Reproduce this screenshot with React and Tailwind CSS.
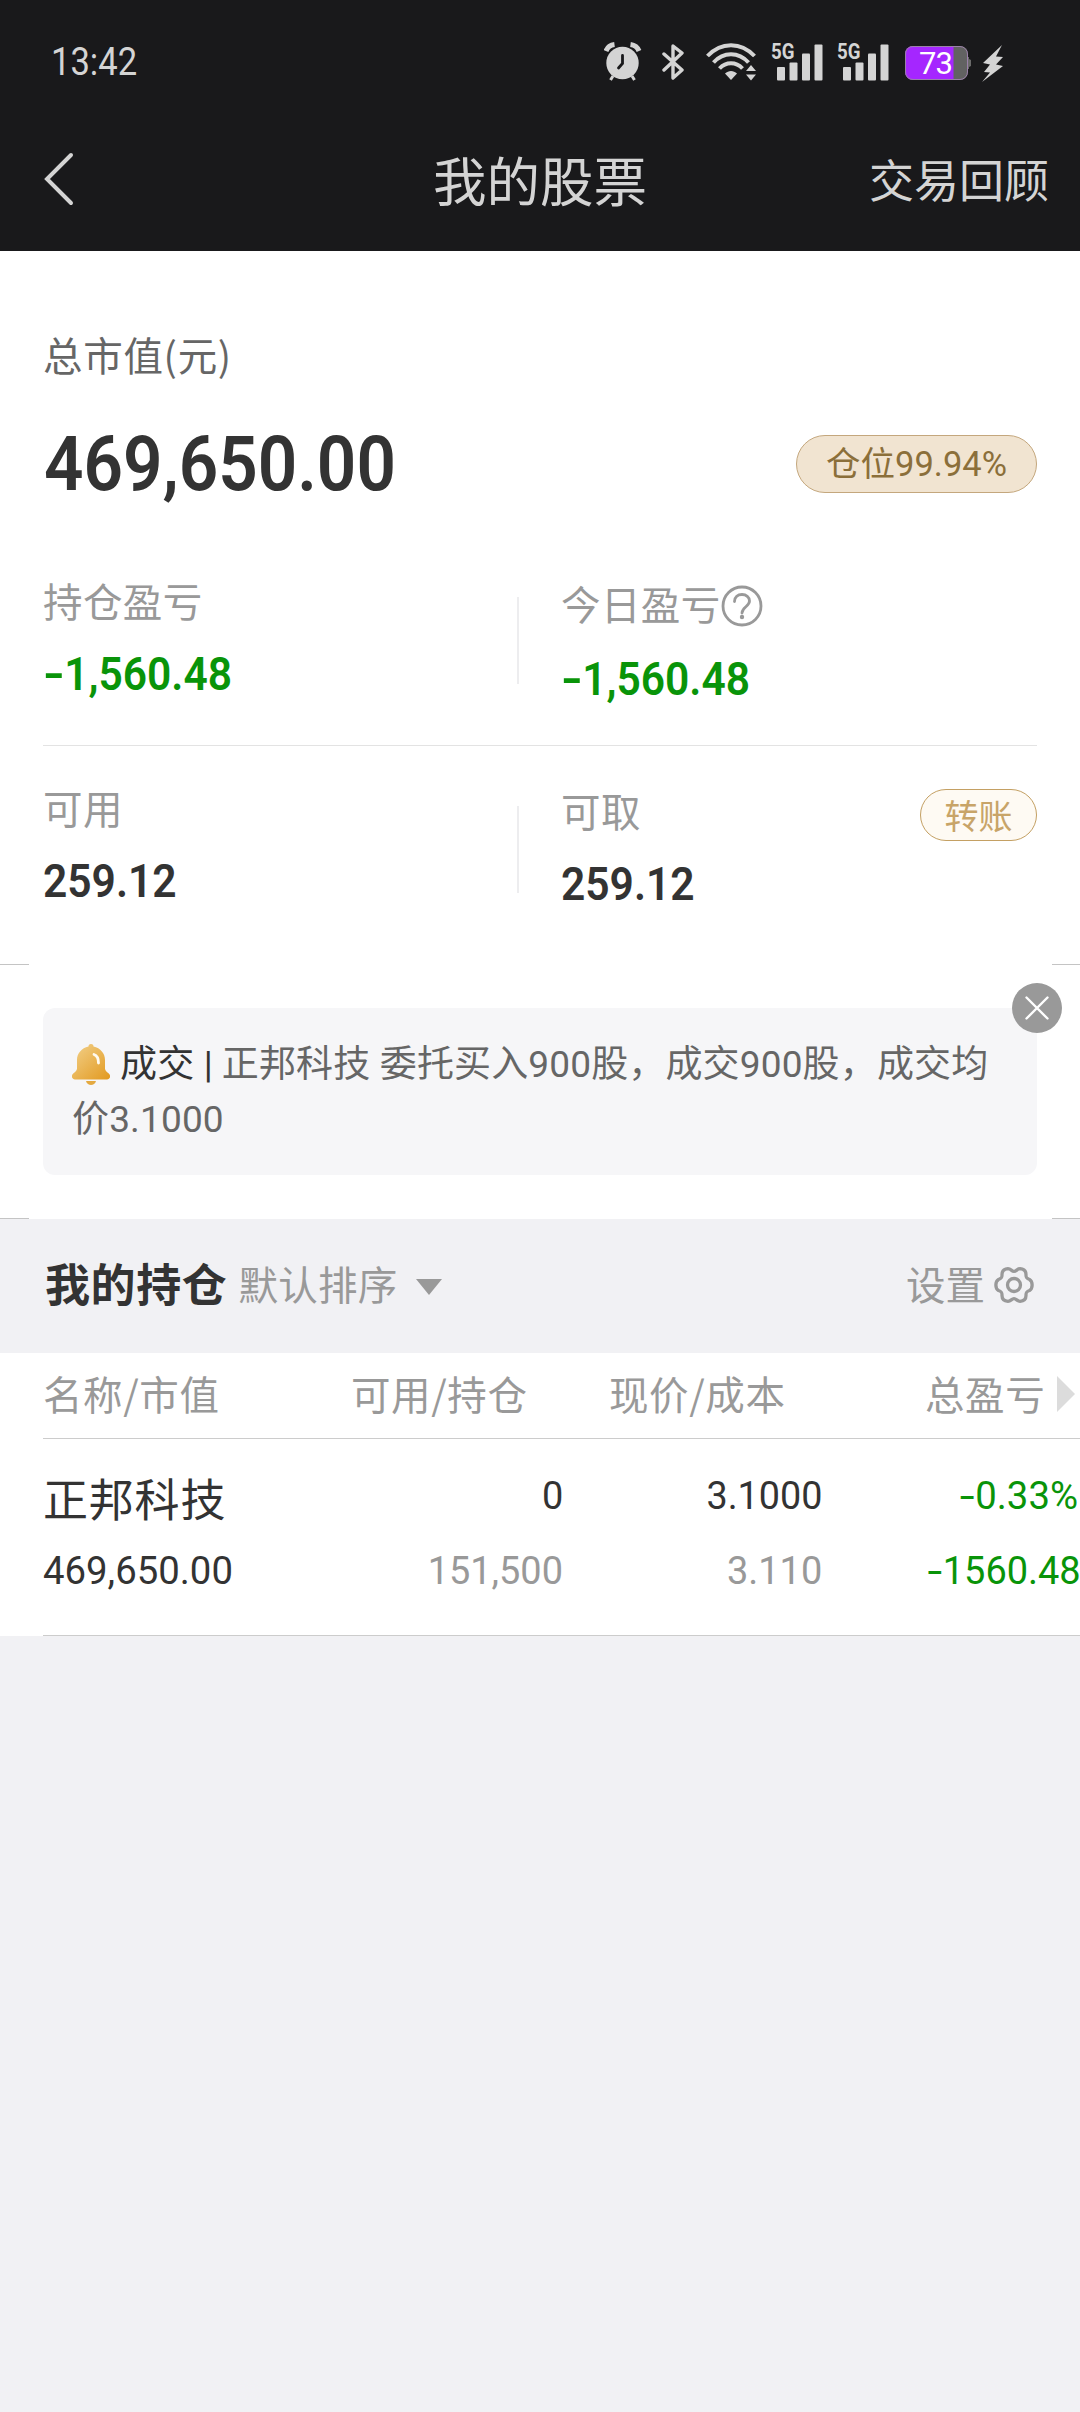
import React from 'react';
import clsx from 'clsx';

// Digits are set a bit narrower than Roboto's natural width, the minus a bit wider
const Num = ({ children, className }) => {
  const negative = children.startsWith('-');
  return (
    <span className={clsx("inline-block whitespace-nowrap font-['Roboto',sans-serif]", className)}>
      {negative && <span className="inline-block origin-left scale-x-[1.4] mr-[0.13em]">-</span>}
      {negative ? children.slice(1) : children}
    </span>
  );
};

const AlarmIcon = () => (
  <svg className="w-[38px] h-[40px]" viewBox="0 0 38 40" fill="none">
    <circle cx="18.5" cy="21" r="16.2" fill="#d4d4d4" />
    <path d="M2 9C3.500 5 6.500 3 10.500 2.500M35 9C33.500 5 30.500 3 26.500 2.500" stroke="#d4d4d4" strokeWidth="5" />
    <path d="M9 34l-2.500 4M28 34l2.500 4" stroke="#d4d4d4" strokeWidth="3" />
    <path d="M18.500 13.500v8l-4 4.500" stroke="#19191b" strokeWidth="2.800" strokeLinecap="round" />
  </svg>
);

const BluetoothIcon = () => (
  <svg className="w-[22px] h-[38px]" viewBox="0 0 22 38" fill="none" stroke="#d4d4d4" strokeWidth="3.400" strokeLinejoin="round" strokeLinecap="round">
    <path d="M2 11l18 16-9 8V3l9 7L2 27" />
  </svg>
);

const WifiIcon = () => (
  <svg className="w-[50px] h-[38px]" viewBox="0 0 50 38" fill="none">
    <path d="M1.500 13C15-1.500 35-1.500 48.500 13" stroke="#d4d4d4" strokeWidth="4" />
    <path d="M7.500 19.500C17.500 8.500 32.500 8.500 42.500 19.500" stroke="#d4d4d4" strokeWidth="4" />
    <path d="M13.500 25.500C20 18.500 30 18.500 36.500 25.500" stroke="#d4d4d4" strokeWidth="4" />
    <path d="M19 30.500C22.500 27 27.500 27 31 30.500L25 37z" fill="#d4d4d4" />
    <path d="M40 28l5-6 5 6zM40 31.500h10l-5 6z" fill="#d4d4d4" />
  </svg>
);

const SignalIcon = () => (
  <div className="relative w-[52px] h-[38px]">
    <span className="absolute left-0 -top-[4px] origin-left scale-x-[0.85] font-['Roboto',sans-serif] text-[22px] leading-[25px] font-bold text-[#d4d4d4]">5G</span>
    <svg className="w-[52px] h-[38px]" viewBox="0 0 52 38" fill="#d4d4d4">
      <rect x="6" y="24" width="8" height="13.500" rx="1" />
      <rect x="18.500" y="19.500" width="8" height="18" rx="1" />
      <rect x="31" y="10.500" width="8" height="27" rx="1" />
      <rect x="43.500" y="1.500" width="8" height="36" rx="1" />
    </svg>
  </div>
);

const Battery = () => (
  <div className="relative w-[66px] h-[34px]">
    <svg className="w-[66px] h-[34px]" viewBox="0 0 66 34">
      <defs>
        <clipPath id="cell"><rect width="63" height="34" rx="8" /></clipPath>
      </defs>
      <path d="M62 11h2v2l2 1v6l-2 1v2h-2z" fill="#6a6a6a" />
      <g clipPath="url(#cell)">
        <rect width="63" height="34" fill="#626262" />
        <rect width="48.500" height="34" fill="#a526ff" />
      </g>
      <rect x=".5" y=".5" width="62" height="33" rx="7.500" fill="none" stroke="#9a80a8" />
    </svg>
    <span className="absolute left-[14px] top-0 font-['Roboto',sans-serif] text-[31px] leading-[35px] tracking-[-1px] text-white">73</span>
  </div>
);

const BellIcon = () => (
  <svg className="w-[38px] h-[42px]" viewBox="0 0 38 42">
    <defs>
      <linearGradient id="bell" x1="0" y1="0" x2="1" y2="1">
        <stop offset="0.2" stopColor="#efc676" />
        <stop offset="1" stopColor="#e2991f" />
      </linearGradient>
    </defs>
    <path d="M14 37h10c-.5 2.500-3 4-5 4s-4.500-1.500-5-4z" fill="#e4a940" />
    <path d="M19 0c1.800 0 2.500 1.300 2.500 2.500C28.500 4 33 9.500 33 16v8.500c0 1.500 1 2.800 3.500 4.800 3 2.500 1.500 6.200-1.500 6.200H3c-3 0-4.500-3.700-1.500-6.200 2.500-2 3.500-3.300 3.500-4.800V16C5 9.500 9.500 4 16.500 2.500 16.500 1.300 17.200 0 19 0z" fill="url(#bell)" />
    <path d="M22 10.500c3 1 4.500 4 4.500 8.500" fill="none" stroke="#fffaf0" strokeWidth="2.800" strokeLinecap="round" />
  </svg>
);

const GearIcon = () => (
  <svg className="w-[40px] h-[40px]" viewBox="0 0 40 40" fill="none" stroke="#999" strokeWidth="3.300" strokeLinejoin="round">
    <path d="M20 6.300C22.500 6.300 23 3.700 26 3.700C30 4 32 6.500 32 9.500C31.800 12.500 32.500 13.500 35.500 14.500C39 16.500 39 23.500 35.500 25.500C32.500 26.500 31.800 27.500 32 30.500C32 33.500 30 36 26 36.300C23 36.300 22.500 33.700 20 33.700C17.500 33.700 17 36.300 14 36.300C10 36 8 33.500 8 30.500C8.200 27.500 7.500 26.500 4.500 25.500C1 23.500 1 16.500 4.500 14.500C7.500 13.500 8.200 12.500 8 9.500C8 6.500 10 4 14 3.700C17 3.700 17.500 6.300 20 6.300z" />
    <circle cx="20" cy="20" r="6.500" />
  </svg>
);

const HelpIcon = () => (
  <svg className="w-[42px] h-[42px] mt-[5px]" viewBox="0 0 42 42" fill="none" stroke="#999" strokeWidth="2.800">
    <circle cx="21" cy="21" r="19" />
    <path d="M13.500 16.500c0-4.500 3.300-7 7.500-7s7.500 2.700 7.500 6.500c0 5.500-7.500 6-7.500 12" strokeLinecap="round" />
    <circle cx="21" cy="32" r="2.200" fill="#999" stroke="none" />
  </svg>
);

// Short hairlines that peek out on both screen edges
const EdgeLines = () => (
  <div className="flex justify-between h-px">
    <div className="w-[29px] bg-[#c4c4c4]" />
    <div className="w-[28px] bg-[#c4c4c4]" />
  </div>
);

const stats = [
  [
    { label: '持仓盈亏', value: '-1,560.48', color: 'text-[#099409]' },
    { label: '今日盈亏', value: '-1,560.48', color: 'text-[#099409]', help: true },
  ],
  [
    { label: '可用', value: '259.12', color: 'text-[#333]' },
    { label: '可取', value: '259.12', color: 'text-[#333]', transfer: true },
  ],
];

const Stat = ({ item }) => (
  <div className="flex flex-col">
    <div className="flex items-center justify-between h-[50px]">
      <div className="flex items-center">
        <span className="text-[39.5px] leading-[50px] tracking-[0.4px] text-[#999]">{item.label}</span>
        {item.help && <HelpIcon />}
      </div>
      {item.transfer && (
        <button className="mt-[9px] w-[117px] h-[52px] rounded-full border border-[#c4a063] bg-[#fefaf3] text-[34px] leading-[47px] text-[#c8a468]">
          转账
        </button>
      )}
    </div>
    <Num
      className={clsx(
        'self-start origin-left scale-x-[0.905] text-[47px] leading-[56px] font-semibold',
        item.help ? 'mt-[23px]' : 'mt-[21px]',
        item.color
      )}
    >
      {item.value}
    </Num>
  </div>
);

const columns = 'grid grid-cols-[282px_237px_259px_259px] pl-[43px]';

const App = () => {
  return (
    <div className="w-[1080px] h-[2412px] overflow-hidden bg-[#f1f1f4] font-['Noto_Sans_CJK_SC',sans-serif]">
      {/* Status bar */}
      <div className="flex items-center justify-between h-[124px] bg-[#19191b] pl-[51px] pr-[76px]">
        <Num className="origin-left scale-x-[0.91] text-[38px] text-[#d4d4d4]">13:42</Num>
        <div className="flex items-center">
          <AlarmIcon />
          <div className="ml-[20px]"><BluetoothIcon /></div>
          <div className="ml-[22px]"><WifiIcon /></div>
          <div className="ml-[15px]"><SignalIcon /></div>
          <div className="ml-[14px]"><SignalIcon /></div>
          <div className="ml-[16px] mt-[2px]"><Battery /></div>
          <svg className="ml-[11px] mt-[2px] w-[22px] h-[37px]" viewBox="0 0 22 37" fill="#d4d4d4">
            <path d="M20 0L1 18l7 1.500L2 27l6 .5L0 37l21-16-7-1.500 7-7.500-7-.5z" />
          </svg>
        </div>
      </div>

      {/* Title bar */}
      <div className="grid grid-cols-[1fr_auto_1fr] items-center h-[127px] bg-[#19191b] px-[31px] pb-[18px] text-[#d4d4d4]">
        <svg className="ml-[13px] w-[32px] h-[54px]" viewBox="0 0 32 54" fill="none" stroke="#d4d4d4" strokeWidth="4" strokeLinecap="round">
          <path d="M27 3L3 27l24 24" />
        </svg>
        <h1 className="text-center text-[53.5px] leading-[60px] whitespace-nowrap">我的股票</h1>
        <div className="text-right text-[45px] leading-[60px]">交易回顾</div>
      </div>

      {/* Assets */}
      <div className="h-[713px] bg-white px-[43px] pt-[78px]">
        <div className="text-[39.5px] leading-[50px] tracking-[0.7px] text-[#666]">总市值(元)</div>
        <div className="flex items-center justify-between mt-[44px] h-[82px]">
          <Num className="origin-left scale-x-[0.91] pl-px text-[76px] leading-[82px] font-semibold text-[#333]">469,650.00</Num>
          <div className="w-[241px] h-[58px] rounded-full border border-[#c4a77d] bg-[#f1e4d1] text-center font-['Roboto','Noto_Sans_CJK_SC',sans-serif] text-[34.5px] leading-[57px] text-[#8b6f3a]">
            仓位99.94%
          </div>
        </div>
        {stats.map((row, i) => (
          <div key={i} className={clsx('flex', i === 0 ? 'mt-[70px] h-[171px] border-b border-[#e3e3e3]' : 'pt-[36px]')}>
            <div className="w-[474px]"><Stat item={row[0]} /></div>
            <div className={clsx('w-[2px] h-[87px] bg-[#ededef]', i === 0 ? 'mt-[22px]' : 'mt-[24px]')} />
            <div className="mt-[3px] ml-[42px] flex-1"><Stat item={row[1]} /></div>
          </div>
        ))}
      </div>

      {/* Deal notice */}
      <div className="bg-white h-[255px]">
        <EdgeLines />
        <div className="relative mx-[43px] mt-[43px] h-[167px] rounded-[12px] bg-[#f6f6f8] pl-[29px] pt-[29px] font-['Roboto','Noto_Sans_CJK_SC',sans-serif] text-[37px] leading-[55px] tracking-[0.15px] text-[#666]">
          <div className="flex items-center whitespace-nowrap">
            <BellIcon />
            <span className="ml-[10px] text-[#333]">成交 | </span>
            <span className="ml-[9px]">正邦科技 委托买入900股，成交900股，成交均</span>
          </div>
          <div>价3.1000</div>
          <button className="absolute -right-[25px] -top-[25px] flex items-center justify-center size-[50px] rounded-full bg-[#999]">
            <svg className="size-[24px]" viewBox="0 0 24 24" stroke="#fff" strokeWidth="2.400" strokeLinecap="round">
              <path d="M1.500 1.500l21 21M22.500 1.500l-21 21" />
            </svg>
          </button>
        </div>
        <div className="mt-[43px]"><EdgeLines /></div>
      </div>

      {/* Holdings header */}
      <div className="flex items-center justify-between h-[134px] pl-[45px] pr-[46px] pb-[7px]">
        <div className="flex items-center">
          <span className="text-[45px] font-bold tracking-[0.6px] text-[#333]">我的持仓</span>
          <span className="ml-[11px] text-[39.5px] tracking-[0.3px] text-[#999]">默认排序</span>
          <svg className="ml-[18px] mt-[8px] w-[26px] h-[16px]" viewBox="0 0 26 16" fill="#999">
            <path d="M0 0h26L13 16z" />
          </svg>
        </div>
        <div className="flex items-center">
          <span className="text-[39.5px] text-[#999]">设置</span>
          <div className="ml-[9px] mt-[4px]"><GearIcon /></div>
        </div>
      </div>

      {/* Holdings table */}
      <div className="bg-white">
        <div className={clsx(columns, 'items-center h-[85px] pb-[5px] text-[39.5px] leading-[50px] tracking-[0.6px] whitespace-nowrap text-[#999]')}>
          <div>名称/市值</div>
          <div className="pl-[26px]">可用/持仓</div>
          <div className="pl-[47px]">现价/成本</div>
          <div className="flex items-center pl-[104px]">
            总盈亏
            <svg className="ml-[12px] mt-[2px] w-[18px] h-[36px]" viewBox="0 0 18 36" fill="#dcdcdc">
              <path d="M0 0l18 18L0 36z" />
            </svg>
          </div>
        </div>
        <div className="ml-[43px] h-px bg-[#ccc]" />
        <div className={clsx(columns, 'h-[196px] pt-[29px] text-[39.5px] leading-[50px] text-[#333]')}>
          <div className="flex flex-col">
            <span className="text-[45px] leading-[60px] tracking-[0.8px]">正邦科技</span>
            <Num className="mt-[18px] self-start origin-left scale-x-[0.97] font-[450]">469,650.00</Num>
          </div>
          <div className="flex flex-col items-end">
            <Num className="mt-[3px] -mr-px origin-right scale-x-[0.96] font-[450]">0</Num>
            <Num className="mt-[25px] -mr-px origin-right scale-x-[0.96] text-[#999]">151,500</Num>
          </div>
          <div className="flex flex-col items-end">
            <Num className="mt-[3px] -mr-px origin-right scale-x-[0.955] font-[450]">3.1000</Num>
            <Num className="mt-[25px] -mr-px origin-right scale-x-[0.96] text-[#999]">3.110</Num>
          </div>
          <div className="flex flex-col items-end text-[#099409]">
            <Num className="mt-[3px] mr-[2px] origin-right scale-x-[0.97] font-[450]">-0.33%</Num>
            <Num className="mt-[25px] -mr-px origin-right scale-x-[0.96] font-[450]">-1560.48</Num>
          </div>
        </div>
      </div>
      <div className="flex h-px bg-white">
        <div className="ml-[43px] flex-1 bg-[#ccc]" />
      </div>
    </div>
  );
};

export default App;
